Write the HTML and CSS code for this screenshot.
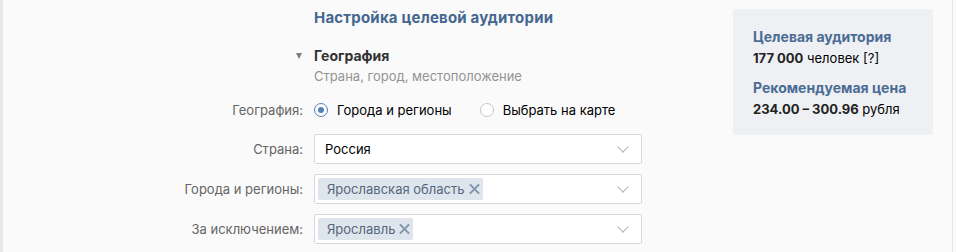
FILE: index.html
```html
<!DOCTYPE html>
<html>
<head>
	<meta charset="utf-8"/>
	<title>Настройка целевой аудитории</title>
	<link rel="stylesheet" href="styles.css">
</head>
<body>
	<div id="page">
		<div id="main">
			<div id="form">
				<div class="cell"></div>
				<h2 id="title">Настройка целевой аудитории</h2>

				<div class="cell arrow-cell"><span class="arrow"></span></div>
				<div id="section">География</div>

				<div class="cell"></div>
				<div id="subtitle">Страна, город, местоположение</div>

				<div class="label radio-label">География:</div>
				<div class="radios">
					<label class="radio"><span class="dot on"></span>Города и регионы</label>
					<label class="radio"><span class="dot"></span>Выбрать на карте</label>
				</div>

				<div class="label">Страна:</div>
				<div class="select"><span class="value">Россия</span><span class="chev"></span></div>

				<div class="label">Города и регионы:</div>
				<div class="select"><span class="token">Ярославская область<i class="x"></i></span><span class="chev"></span></div>

				<div class="label">За исключением:</div>
				<div class="select"><span class="token">Ярославль<i class="x"></i></span><span class="chev"></span></div>
			</div>
			<div id="summary">
				<div class="sum-title">Целевая аудитория</div>
				<div class="sum-value"><b>177 000</b> человек [?]</div>
				<div class="sum-title second">Рекомендуемая цена</div>
				<div class="sum-value"><b>234.00 – 300.96</b> рубля</div>
			</div>
		</div>
	</div>
</body>
</html>
```

FILE: styles.css
```css
*{
	margin:0;
	padding:0;
	box-sizing:border-box;
}
html,body{
	height:100%;
}
body{
	background:#fbfbfb;
	font-family:Inter,"Noto Sans",sans-serif;
	font-size:13px;
	color:#000;
}
#page{
	height:100%;
	border-left:3px solid #e7e8ec;
}
#main{
	width:950px;
	height:100%;
	background:#fafafa;
	border-right:1px solid #e5e6ea;
	display:flex;
	align-items:flex-start;
}
#form{
	display:grid;
	grid-template-columns:300px 328px;
	column-gap:11px;
	padding-top:8px;
}
#title{
	font-size:15px;
	line-height:20px;
	font-weight:bold;
	color:#45678f;
	letter-spacing:0.2px;
}
#section{
	margin-top:18px;
	font-size:14px;
	line-height:20px;
	font-weight:bold;
	color:#333;
}
.arrow-cell{
	margin-top:18px;
	display:flex;
	justify-content:flex-end;
	align-items:center;
	padding-right:1px;
}
.arrow{
	width:0;
	height:0;
	border-left:3.5px solid transparent;
	border-right:3.5px solid transparent;
	border-top:6px solid #7d7d7d;
}
#subtitle{
	margin-top:1px;
	line-height:18px;
	color:#939393;
}
.label{
	margin-top:10px;
	line-height:30px;
	text-align:right;
	color:#656565;
}
.radio-label{
	margin-top:15px;
	line-height:20px;
}
.radios{
	margin-top:15px;
	display:flex;
	align-items:center;
	height:20px;
	gap:28px;
}
.radio{
	display:flex;
	align-items:center;
	gap:9px;
	color:#000;
}
.dot{
	width:14px;
	height:14px;
	border:1px solid #c1c9d1;
	border-radius:50%;
	background:#fff;
	display:flex;
	align-items:center;
	justify-content:center;
}
.dot.on{
	border-color:#5181b8;
}
.dot.on:after{
	content:"";
	width:6px;
	height:6px;
	border-radius:50%;
	background:#5181b8;
}
.select{
	margin-top:10px;
	height:30px;
	border:1px solid #d3d9de;
	border-radius:2px;
	background:#fff;
	display:flex;
	align-items:center;
	padding:0 8px 0 3px;
}
.radios + .label,
.radios + .label + .select{
	margin-top:14px;
}
.value{
	padding-left:7px;
	flex:1;
}
.token{
	height:22px;
	line-height:22px;
	padding:0 3px 0 9px;
	background:#dfe5ec;
	border-radius:2px;
	color:#55677d;
	display:flex;
	align-items:center;
	margin-right:auto;
}
.x{
	position:relative;
	width:11px;
	height:11px;
	margin-left:4px;
}
.x:before,.x:after{
	content:"";
	position:absolute;
	left:-1px;
	top:4.5px;
	width:13px;
	height:2px;
	background:#8196ad;
	transform:rotate(45deg);
}
.x:after{
	transform:rotate(-45deg);
}
.chev{
	width:8px;
	height:8px;
	border-right:1px solid #aab4bf;
	border-bottom:1px solid #aab4bf;
	transform:rotate(45deg);
	margin:-4px 6px 0 0;
}
#summary{
	margin:9px 0 0 91px;
	width:200px;
	height:126px;
	background:#eef0f3;
	padding:19px 20px 0;
}
.sum-title{
	font-size:14px;
	font-weight:bold;
	line-height:18px;
	color:#4a6c94;
}
.sum-title.second{
	margin-top:11px;
}
.sum-value{
	margin-top:2px;
	line-height:20px;
	color:#000;
}
.sum-value b{
	color:#222;
}
```
